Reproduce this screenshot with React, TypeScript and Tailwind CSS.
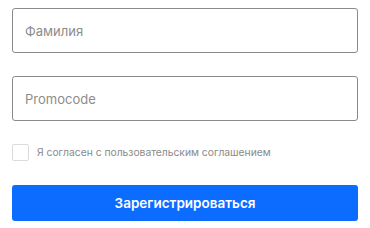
import React from 'react';

export default function App() {
  return (
    <div className="w-[370px] h-[228px] bg-white px-3 pt-2 flex flex-col" style={{ fontFamily: 'Inter, "Noto Sans", sans-serif' }}>
      <input
        placeholder="Фамилия"
        className="h-[45px] w-[346px] rounded-[3px] border border-[#8a8a8a] px-3 text-[13px] text-[#333] placeholder:text-[#8c8c8c] outline-none"
      />
      <input
        placeholder="Promocode"
        className="mt-[23px] h-[45px] w-[346px] rounded-[3px] border border-[#8a8a8a] px-3 text-[13px] text-[#333] placeholder:text-[#8c8c8c] outline-none"
      />
      <label className="mt-[23px] flex items-center gap-2 h-[17px]">
        <span className="w-[17px] h-[17px] border border-[#dcdcdc] rounded-[2px] bg-white" />
        <span className="text-[10.3px] text-[#8a8a8a]">Я согласен с пользовательским соглашением</span>
      </label>
      <button className="mt-[24px] h-[36px] w-[346px] rounded-[3px] bg-[#0b6cff] text-white text-[13.5px] font-semibold">
        Зарегистрироваться
      </button>
    </div>
  );
}
